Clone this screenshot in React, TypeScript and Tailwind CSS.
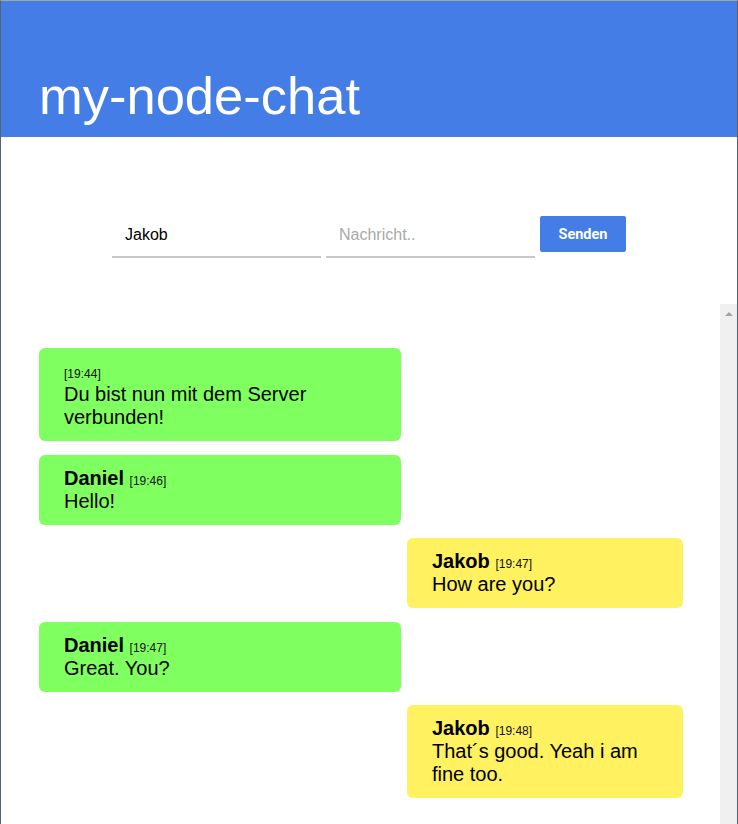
import { useState } from "react";

type Message = {
  name: string;
  time: string;
  text: string;
  own: boolean;
};

const messages: Message[] = [
  { name: "", time: "19:44", text: "Du bist nun mit dem Server verbunden!", own: false },
  { name: "Daniel", time: "19:46", text: "Hello!", own: false },
  { name: "Jakob", time: "19:47", text: "How are you?", own: true },
  { name: "Daniel", time: "19:47", text: "Great. You?", own: false },
  { name: "Jakob", time: "19:48", text: "That´s good. Yeah i am fine too.", own: true },
];

function ChatMessage({ msg }: { msg: Message }) {
  return (
    <div
      className={
        msg.own
          ? "ml-auto w-[276px] rounded-md bg-[#fff160] px-[25px] py-[12px] text-[20px] leading-[23px] text-black"
          : "w-[362px] rounded-md bg-[#80ff60] px-[25px] py-[12px] text-[20px] leading-[23px] text-black"
      }
    >
      <div>
        {msg.name && <span className="font-bold">{msg.name} </span>}
        <span className="text-[12px] leading-[14px] text-[#111]">[{msg.time}]</span>
      </div>
      <div>{msg.text}</div>
    </div>
  );
}

function App() {
  const [name, setName] = useState("Jakob");
  const [text, setText] = useState("");

  return (
    <div className="flex h-[824px] flex-col overflow-hidden border-x border-t border-x-[#56626d] border-t-[#a2a6aa] bg-white font-['Liberation_Sans',Arial,sans-serif]">
      <header className="flex h-[136px] shrink-0 items-end bg-[#447de6] pb-[15px] pl-[38px]">
        <h1 className="text-[52.5px] leading-none text-white">my-node-chat</h1>
      </header>

      <form
        onSubmit={(e) => e.preventDefault()}
        className="mt-[77px] flex shrink-0 items-start justify-center"
      >
        <input
          value={name}
          onChange={(e) => setName(e.target.value)}
          className="mr-[5px] h-[44px] w-[209px] border-b-2 border-[#c8c8c8] pl-[13px] text-[16px] text-black outline-none"
        />
        <input
          value={text}
          onChange={(e) => setText(e.target.value)}
          placeholder="Nachricht.."
          className="mr-[5px] h-[44px] w-[209px] border-b-2 border-[#c8c8c8] pl-[13px] text-[16px] text-black outline-none placeholder:text-[#a9a9a9]"
        />
        <button
          type="submit"
          className="mt-[2px] h-[36px] w-[86px] rounded-[2px] bg-[#447de6] pt-[2px] font-['Roboto',sans-serif] text-[14.5px] font-bold text-white"
        >
          Senden
        </button>
      </form>

      <div className="mt-[46px] flex min-h-0 flex-1">
        <div className="flex flex-1 flex-col gap-[13.5px] pl-[38px] pr-[37px] pt-[44px]">
          {messages.map((m, i) => (
            <ChatMessage key={i} msg={m} />
          ))}
        </div>
        <div className="flex w-[17px] shrink-0 justify-center bg-[#f0f0f0] pt-[8px]">
          <div className="h-0 w-0 border-x-[4px] border-b-[4px] border-x-transparent border-b-[#a3a3a3]" />
        </div>
      </div>
    </div>
  );
}

export default App;
